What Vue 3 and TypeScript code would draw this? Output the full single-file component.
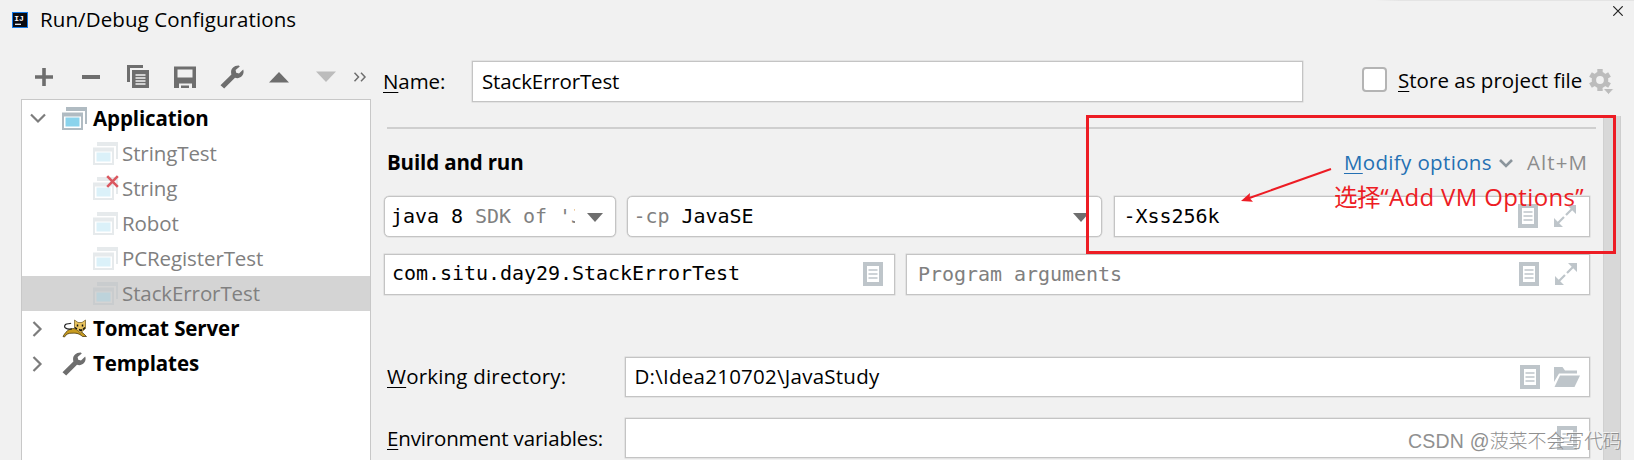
<script setup lang="ts">
interface TreeRow {
  label: string
  kind: 'group' | 'item'
  icon: 'app' | 'cat' | 'wrench'
  open?: boolean
  broken?: boolean
  selected?: boolean
}

const rows: TreeRow[] = [
  { label: 'Application', kind: 'group', icon: 'app', open: true },
  { label: 'StringTest', kind: 'item', icon: 'app' },
  { label: 'String', kind: 'item', icon: 'app', broken: true },
  { label: 'Robot', kind: 'item', icon: 'app' },
  { label: 'PCRegisterTest', kind: 'item', icon: 'app' },
  { label: 'StackErrorTest', kind: 'item', icon: 'app', selected: true },
  { label: 'Tomcat Server', kind: 'group', icon: 'cat' },
  { label: 'Templates', kind: 'group', icon: 'wrench' },
]
</script>

<template>
  <div class="dialog">
    <svg class="defs" width="0" height="0" aria-hidden="true">
      <symbol id="doc" viewBox="0 0 20 24">
        <path d="M0 0h20v24H0zM4 4v16h12V4z" fill="#bec5ca" fill-rule="evenodd" />
        <path d="M5.5 8h9M5.5 12h9M5.5 16h9" stroke="#bec5ca" stroke-width="1.4" />
      </symbol>
      <symbol id="expand" viewBox="0 0 22 22">
        <path d="M13 0h9v9zM0 13v9h9z" fill="#bec5ca" />
        <path d="M18 4l-6 6M4 18l6-6" stroke="#bec5ca" stroke-width="2.2" />
      </symbol>
      <symbol id="wrench" viewBox="0 0 24 24">
        <path d="M0.5 20.2L11.4 9.4C10 4.800 13.200 0.4 18.8 0.6L19.800 1.400L15.6 5L16.2 7.8L19 8.4L23.2 4.4C25 10 20.4 14.4 15 12.8L4.200 23.6z" fill="#6e6e6e" />
      </symbol>
    </svg>

    <header class="titlebar">
      <svg class="logo" width="16" height="16" viewBox="0 0 16 16">
        <rect width="16" height="16" fill="#1479e8" />
        <rect x="1" y="1" width="14" height="14" fill="#0a0a10" />
        <text x="2.2" y="9" class="logo-text">IJ</text>
        <path d="M3 12.3h6" stroke="#fff" stroke-width="1.2" />
      </svg>
      <span class="title">Run/Debug Configurations</span>
      <svg class="close" width="10" height="10" viewBox="0 0 10 10">
        <path d="M.3.3l9.4 9.4M9.7.3L.3 9.7" stroke="#222" stroke-width="1.2" />
      </svg>
    </header>

    <div class="body">
      <aside class="side">
        <div class="toolbar">
          <svg width="24" height="24" viewBox="0 0 24 24"><path d="M3 12h18M12 3v18" stroke="#6e6e6e" stroke-width="3.6" /></svg>
          <svg width="24" height="24" viewBox="0 0 24 24"><path d="M3 12h18" stroke="#6e6e6e" stroke-width="4" /></svg>
          <svg width="24" height="24" viewBox="0 0 24 24">
            <path d="M1 0h16v3H4v14H1z" fill="#6e6e6e" />
            <path d="M6 5h17v18H6z" fill="#6e6e6e" />
            <path d="M9.5 10h10M9.5 13h10M9.5 16h10M9.5 19h10" stroke="#f2f2f2" stroke-width="1.7" />
          </svg>
          <svg width="24" height="24" viewBox="0 0 24 24">
            <path d="M1 1.500h22v21.500h-4v-4.500h-13v4.500h-5zM4.500 4.500v8h15v-8z" fill="#6e6e6e" fill-rule="evenodd" />
            <path d="M8 20.500h8v2.500h-8z" fill="#6e6e6e" />
          </svg>
          <svg width="24" height="24"><use href="#wrench" /></svg>
          <svg width="24" height="24" viewBox="0 0 24 24"><path d="M12 7l10 10.500H2z" fill="#6e6e6e" /></svg>
          <svg width="24" height="24" viewBox="0 0 24 24"><path d="M12 17L2 6.500h20z" fill="#bcbcbc" /></svg>
          <svg class="more" width="14" height="10" viewBox="0 0 14 10">
            <path d="M1.500 .8L5.500 5l-4 4.200M8 .8L12 5L8 9.200" fill="none" stroke="#6e6e6e" stroke-width="1.5" />
          </svg>
        </div>

        <div class="tree">
          <div v-for="row in rows" :key="row.label" class="row" :class="[row.kind, { selected: row.selected }]">
            <svg class="arrow" width="16" height="16" viewBox="0 0 16 16">
              <path v-if="row.open" d="M1 3.500l7 7 7-7" />
              <path v-else-if="row.kind === 'group'" d="M3.500 1l7 7-7 7" />
            </svg>
            <span class="icon">
              <svg v-if="row.icon === 'app'" class="app" width="25" height="23" viewBox="0 0 25 23">
                <path d="M4 0h21v17h-2V4H4z" fill="#b0bbc2" />
                <path d="M0 5.500h21V23H0zM2 9.500V21h17V9.500z" fill="#b0bbc2" fill-rule="evenodd" />
                <path d="M3.500 10.500h14v9h-14z" fill="#8ad3ec" />
              </svg>
              <svg v-else-if="row.icon === 'cat'" width="25" height="20" viewBox="0 0 25 20">
                <path d="M1 17.500C5 10.500 9 8.500 14 10c4 1 7 4 10.500 7.500h-4C17 14 13 14 10 14.200C7 14 4 15 2.500 18z" fill="#c99c1f" stroke="#493a14" stroke-width=".8" />
                <path d="M12.500 9V1l3.500 2.500h4L23.500 1v8.500L18.500 14z" fill="#e9c35d" stroke="#6b561f" stroke-width=".7" />
                <path d="M10 10C4 11 1 8 3.500 5.500C5 4 8 5.500 9 4" fill="none" stroke="#222" stroke-width="1.2" />
                <path d="M15.500 5.500v2M20.500 5.500v2M13 8.500l2 1.500M23 8.500L21 10.500M17 10.500l2 1 1-1" stroke="#111" stroke-width="1.5" fill="none" />
              </svg>
              <svg v-else width="24" height="24"><use href="#wrench" /></svg>
              <svg v-if="row.broken" class="cross" width="13" height="13" viewBox="0 0 13 13">
                <path d="M1.200 1.200l10.600 10.600M11.800 1.200L1.200 11.800" stroke="#db5860" stroke-width="2.600" />
              </svg>
            </span>
            <span class="label">{{ row.label }}</span>
          </div>
        </div>
      </aside>

      <main class="main">
        <div class="name-row">
          <label class="name-label"><u>N</u>ame:</label>
          <div class="field name-field">StackErrorTest</div>
          <span class="checkbox"></span>
          <span class="store"><u>S</u>tore as project file</span>
          <svg class="gear" width="25" height="26" viewBox="0 0 25 26">
            <g fill="#bcbcbc">
              <path v-for="a in [0, 60, 120]" :key="a" d="M8.300 0h5.400v22H8.300z" :transform="`rotate(${a} 11 11)`" />
              <circle cx="11" cy="11" r="8.300" />
              <path d="M14 19.500h11l-5.500 6z" stroke="#f1f1f1" stroke-width="1" />
            </g>
            <circle cx="11" cy="11" r="3.900" fill="#f1f1f1" />
          </svg>
        </div>

        <div class="scroll">
          <div class="form">
            <div class="heading">
              <h2>Build and run</h2>
              <span class="modify"><u>M</u>odify options</span>
              <svg class="chev" width="14" height="10" viewBox="0 0 14 10"><path d="M1 2l6 6 6-6" fill="none" stroke="#8b959c" stroke-width="2.600" /></svg>
              <span class="key">Alt+M</span>
            </div>

            <div class="line mono first">
              <div class="field combo jdk">
                <span class="clip">java 8 <i>SDK of 'J</i></span>
                <svg width="16" height="9" viewBox="0 0 16 9"><path d="M0 0h16L8 9z" fill="#6e6e6e" /></svg>
              </div>
              <div class="field combo cp">
                <span class="clip"><i>-cp</i> JavaSE</span>
                <svg width="16" height="9" viewBox="0 0 16 9"><path d="M0 0h16L8 9z" fill="#6e6e6e" /></svg>
              </div>
              <div class="field vm">
                <span class="clip">-Xss256k</span>
                <svg width="20" height="24"><use href="#doc" /></svg>
                <svg width="22" height="22"><use href="#expand" /></svg>
              </div>
            </div>

            <div class="line mono second">
              <div class="field cls">
                <span class="clip">com.situ.day29.StackErrorTest</span>
                <svg width="20" height="24"><use href="#doc" /></svg>
              </div>
              <div class="field args">
                <span class="clip"><i>Program arguments</i></span>
                <svg width="20" height="24"><use href="#doc" /></svg>
                <svg width="22" height="22"><use href="#expand" /></svg>
              </div>
            </div>

            <div class="line dir">
              <label class="wide-label wd"><u>W</u>orking directory:</label>
              <div class="field grow">
                <span class="clip path">D:\Idea210702\JavaStudy</span>
                <svg width="20" height="24"><use href="#doc" /></svg>
                <svg class="folder" width="26" height="20" viewBox="0 0 26 20">
                  <path d="M0 0h8.500l2.500 3.500h12v3H5L0 15z" fill="#bec5ca" />
                  <path d="M6 8.500h20L20.500 20H.5z" fill="#bec5ca" />
                </svg>
              </div>
            </div>

            <div class="line env">
              <label class="wide-label ev"><u>E</u>nvironment variables:</label>
              <div class="field grow">
                <span class="clip"></span>
                <svg class="env-doc" width="20" height="24"><use href="#doc" /></svg>
              </div>
            </div>
          </div>
          <div class="scrollbar"></div>
        </div>
      </main>
    </div>

    <div class="callout"></div>
    <svg class="pointer" width="92" height="38" viewBox="0 0 92 38">
      <path d="M91 4L8 33.500" stroke="#ed1c24" stroke-width="2" />
      <path d="M1 36L10 28L9.500 33L13 36.800z" fill="#ed1c24" />
    </svg>
    <div class="note"><span>选择</span>“Add VM Options”</div>
    <div class="watermark">CSDN @<span>菠菜不会写代码</span></div>
  </div>
</template>

<style>
body { overflow: hidden; }
</style>

<style scoped>
.dialog {
  position: relative;
  width: 1634px;
  height: 460px;
  overflow: hidden;
  display: flex;
  flex-direction: column;
  box-sizing: border-box;
  background: #f1f1f1;
  color: #000;
  font: 20.5px/28px "Open Sans", "Noto Sans", sans-serif;
  white-space: nowrap;
}
.dialog * { box-sizing: border-box; }
svg { display: block; flex: none; }
.defs { position: absolute; }
u { text-decoration-thickness: 1px; text-underline-offset: 3px; text-decoration-skip-ink: none; }
i { font-style: normal; color: #808080; }

.titlebar { display: flex; height: 55px; padding: 0 11px 0 12px; background: linear-gradient(90deg, transparent 1375px, #e4e4e4 1400px) no-repeat 0 0 / 100% 1px; }
.logo { margin-top: 12px; }
.logo-text { font: bold 8px "Liberation Mono", monospace; fill: #fff; }
.title { margin: 5px auto 0 12px; letter-spacing: .1px; }
.close { margin-top: 6px; }

.body { display: flex; flex: 1; min-height: 0; }
.side { width: 350px; margin-left: 21px; display: flex; flex-direction: column; flex: none; }
.toolbar { display: flex; align-items: center; gap: 23px; height: 44px; padding-left: 11px; }
.more { margin-left: -8px; }
.tree { flex: 1; border: 1px solid #c8c8c8; border-bottom: 0; background: #fff; padding-top: 1px; }
.row { display: flex; align-items: center; height: 35px; }
.arrow { margin: 0 16px 0 8px; fill: none; stroke: #7c7c7c; stroke-width: 2.2; }
.icon { position: relative; width: 25px; margin-right: 6px; flex: none; }
.group { font-weight: 700; }
.item .icon { margin-left: 31px; margin-right: 4px; }
.item .app { opacity: .3; }
.item { color: #808080; }
.label { margin-top: -1px; letter-spacing: -.1px; }
.selected { background: #d4d4d4; }
.cross { position: absolute; left: 13px; top: -2px; }

.main { flex: 1; display: flex; flex-direction: column; min-width: 0; }
.name-row { display: flex; align-items: center; height: 61px; padding: 0 0 8px 12px; }
.name-label { width: 89px; letter-spacing: -.1px; margin-top: -1px; }
.field { display: flex; align-items: center; background: #fff; border: 1px solid #c4c4c4; box-shadow: 0 0 0 .5px #d6d6d6; height: 41px; }
.name-field { width: 831px; padding: 0 0 1px 9px; letter-spacing: -.15px; }
.checkbox { width: 25px; height: 25px; margin-left: 59px; margin-top: -4px; border: 2px solid #b4b4b4; border-radius: 4px; background: #fff; }
.store { margin-left: 11px; letter-spacing: .03px; margin-top: -3px; }
.gear { margin-left: 7px; margin-top: 1px; }

.scroll { flex: 1; display: flex; min-height: 0; }
.form { width: 1232px; padding-top: 11px; }
.heading { display: flex; align-items: center; height: 68.500px; margin: 0 7px 0 16px; border-top: 2px solid #cfcfcf; padding: 0 8px 1px 0; }
.heading h2 { margin: 0 auto 0 0; font-size: 20.500px; line-height: 28px; letter-spacing: -.15px; }
.modify { color: #2470b3; letter-spacing: .35px; }
.chev { margin: 2px 14px 0 7px; }
.key { color: #8c8c8c; letter-spacing: 1.100px; }
.line { display: flex; padding-left: 13px; }
.mono { font-family: "DejaVu Sans Mono", "Liberation Mono", monospace; font-size: 20px; letter-spacing: -.04px; }
.clip { flex: 1; overflow: hidden; min-width: 0; }
.combo { border-radius: 5px; padding: 0 12px 0 6px; }
.combo svg { margin-top: 2px; }
.jdk { width: 231.500px; margin-right: 11px; }
.jdk .clip { margin-right: 12px; }
.cp { width: 475.500px; margin-right: 11.500px; }
.cls .clip { padding-bottom: 2px; }
.vm { width: 476px; padding: 0 12.500px 0 9px; gap: 16px; }
.second { margin-top: 17px; }
.cls { width: 511px; margin-right: 11px; padding: 0 11px 0 7px; }
.args { width: 684px; padding: 0 12.500px 0 11px; gap: 16px; }
.dir { margin-top: 62px; }
.dir .field, .env .field { height: 40.500px; }
.wide-label { width: 238px; margin-left: 3px; padding-top: 5px; }
.wd { letter-spacing: .2px; }
.ev { letter-spacing: -.15px; padding-top: 6px; }
.grow { width: 965px; padding: 0 9.500px 0 8.500px; }
.path { letter-spacing: .25px; padding-bottom: 2px; }
.folder { margin-left: 14px; }
.env { margin-top: 20.500px; }
.env-doc { margin-right: 3px; }
.scrollbar { width: 18px; background: #d8d8d8; border-right: 1px solid #cecece; border-left: 1px solid #d0d0d0; }

.callout { position: absolute; left: 1086px; top: 115px; width: 530px; height: 139px; border: 3px solid #ed1c24; }
.pointer { position: absolute; left: 1240px; top: 165px; }
.note { position: absolute; left: 1334px; top: 182px; color: #ed1c24; font: 24px/30px "Open Sans", "Noto Sans CJK SC", sans-serif; letter-spacing: .35px; }
.note span { font-size: 23.500px; letter-spacing: -.4px; }
.watermark { position: absolute; left: 1408px; top: 427px; font: 300 19.500px/28px "Liberation Sans", "Noto Sans CJK SC", sans-serif; color: #909090; letter-spacing: .2px; text-shadow: -1px -1px 0 rgba(255, 255, 255, .75); }
.watermark span { font-size: 19px; letter-spacing: -.1px; }
</style>
